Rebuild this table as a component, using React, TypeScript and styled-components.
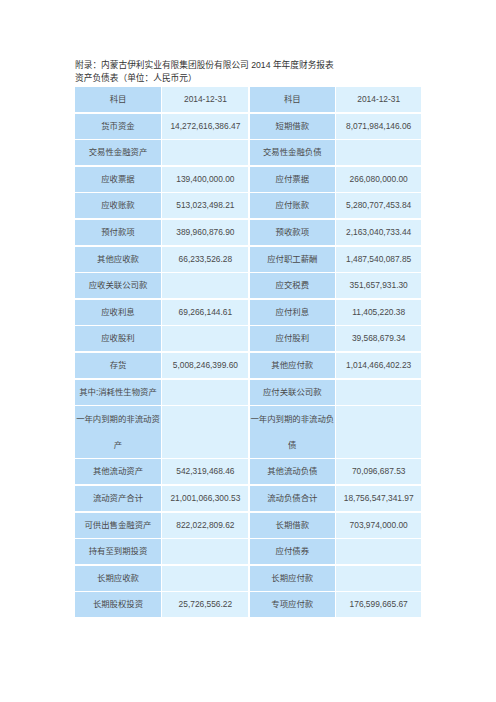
import React from 'react'
import styled, { createGlobalStyle } from 'styled-components'

const GlobalStyle = createGlobalStyle`
  html, body {
    margin: 0;
    padding: 0;
    background: #ffffff;
  }
`

const Page = styled.div`
  width: 496px;
  min-height: 702px;
  padding: 59px 0 0 75px;
  box-sizing: border-box;
  font-family: 'Liberation Sans', 'Noto Sans CJK SC', sans-serif;
`

const Title = styled.div`
  font-size: 8.7px;
  line-height: 13px;
  color: #333;
  white-space: nowrap;
`

const Sheet = styled.div`
  margin-top: 2px;
  width: 346px;
  display: grid;
  grid-template-columns: 86px 86px 85px 85px;
  column-gap: 1.4px;
  row-gap: 1.6px;
`

const Cell = styled.div<{ $label?: boolean; $tall?: boolean }>`
  height: ${(p) => (p.$tall ? '51.6px' : '25px')};
  background: ${(p) => (p.$label ? '#b9dcf7' : '#dcf1fd')};
  color: #4a4a4a;
  font-size: 8.4px;
  line-height: ${(p) => (p.$tall ? '26px' : '25px')};
  text-align: center;
  overflow: hidden;
  word-break: break-all;
`

type Row = [string, string, string, string]

const rows: Row[] = [
  ['科目', '2014-12-31', '科目', '2014-12-31'],
  ['货币资金', '14,272,616,386.47', '短期借款', '8,071,984,146.06'],
  ['交易性金融资产', '', '交易性金融负债', ''],
  ['应收票据', '139,400,000.00', '应付票据', '266,080,000.00'],
  ['应收账款', '513,023,498.21', '应付账款', '5,280,707,453.84'],
  ['预付款项', '389,960,876.90', '预收款项', '2,163,040,733.44'],
  ['其他应收款', '66,233,526.28', '应付职工薪酬', '1,487,540,087.85'],
  ['应收关联公司款', '', '应交税费', '351,657,931.30'],
  ['应收利息', '69,266,144.61', '应付利息', '11,405,220.38'],
  ['应收股利', '', '应付股利', '39,568,679.34'],
  ['存货', '5,008,246,399.60', '其他应付款', '1,014,466,402.23'],
  ['其中:消耗性生物资产', '', '应付关联公司款', ''],
  ['一年内到期的非流动资产', '', '一年内到期的非流动负债', ''],
  ['其他流动资产', '542,319,468.46', '其他流动负债', '70,096,687.53'],
  ['流动资产合计', '21,001,066,300.53', '流动负债合计', '18,756,547,341.97'],
  ['可供出售金融资产', '822,022,809.62', '长期借款', '703,974,000.00'],
  ['持有至到期投资', '', '应付债券', ''],
  ['长期应收款', '', '长期应付款', ''],
  ['长期股权投资', '25,726,556.22', '专项应付款', '176,599,665.67'],
]

export default function App() {
  return (
    <>
      <GlobalStyle />
      <Page>
        <Title>附录：内蒙古伊利实业有限集团股份有限公司 2014 年年度财务报表</Title>
        <Title>资产负债表（单位：人民币元）</Title>
        <Sheet>
          {rows.map((r, i) => {
            const tall = r[0].length > 10
            return r.map((text, j) => (
              <Cell key={`${i}-${j}`} $label={j % 2 === 0} $tall={tall}>
                {text}
              </Cell>
            ))
          })}
        </Sheet>
      </Page>
    </>
  )
}
